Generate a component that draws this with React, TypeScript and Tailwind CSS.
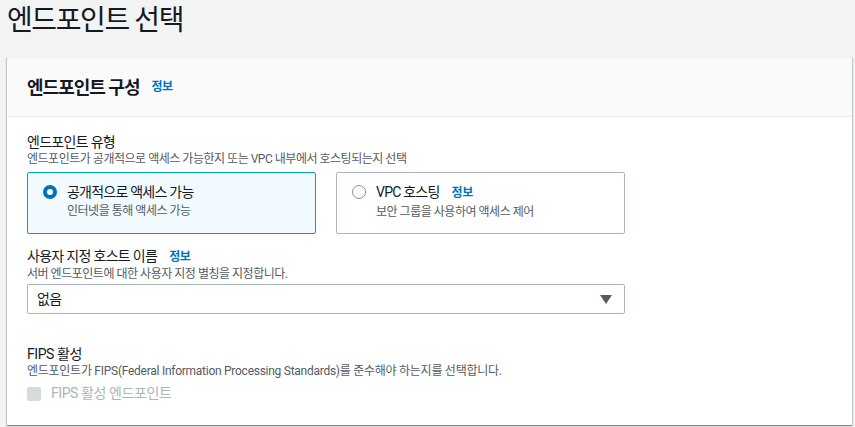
const font = { fontFamily: 'Roboto, "Noto Sans CJK KR", sans-serif' };

function Info() {
  return <span className="ml-3 text-[12px] font-bold text-[#0073bb] tracking-[-0.04em]">정보</span>;
}

function RadioCard({
  checked,
  label,
  sub,
  info,
}: {
  checked?: boolean;
  label: string;
  sub: string;
  info?: boolean;
}) {
  return (
    <div
      className={
        checked
          ? 'flex-1 h-[62px] border border-[#00a1c9] bg-[#f1faff] rounded-[2px] flex items-start pl-[15px] pt-[9px]'
          : 'flex-1 h-[62px] border border-[#aab7b8] bg-white rounded-[2px] flex items-start pl-[15px] pt-[9px]'
      }
    >
      {checked ? (
        <span className="mt-[3px] w-[14px] h-[14px] rounded-full border-[4px] border-[#0073bb] bg-white shrink-0" />
      ) : (
        <span className="mt-[3px] w-[14px] h-[14px] rounded-full border border-[#879596] bg-white shrink-0" />
      )}
      <div className="ml-[10px]">
        <p className="text-[14px] leading-[20px] text-[#16191f] tracking-[-0.055em]">
          {label}
          {info && <Info />}
        </p>
        <p className="text-[12px] leading-[18px] text-[#545b64] tracking-[-0.04em]">{sub}</p>
      </div>
    </div>
  );
}

export default function App() {
  return (
    <main className="w-[855px] h-[427px] bg-[#f2f3f3] overflow-hidden" style={font}>
      <h1 className="pl-[7px] pt-[1px] h-[57px] text-[28px] leading-[40px] text-[#16191f] tracking-[-0.05em]">
        엔드포인트 선택
      </h1>

      <section className="mx-[7px] mr-[3px] bg-white border-t border-[#eaeded] shadow-[0_1px_1px_0_rgba(0,28,36,0.3),1px_1px_1px_0_rgba(0,28,36,0.15),-1px_1px_1px_0_rgba(0,28,36,0.15)]">
        {/* Header */}
        <div className="h-[59px] bg-[#fafafa] border-b border-[#eaeded] flex items-center px-5">
          <h2 className="text-[18px] font-bold text-[#16191f] tracking-[-0.055em]">엔드포인트 구성</h2>
          <Info />
        </div>

        {/* Body */}
        <div className="px-5 pt-[16px] pb-[21px]">
          <p className="text-[14px] leading-[18px] text-[#16191f] tracking-[-0.05em]">엔드포인트 유형</p>
          <p className="text-[12px] leading-[16px] text-[#545b64] tracking-[-0.04em]">
            엔드포인트가 공개적으로 액세스 가능한지 또는 VPC 내부에서 호스팅되는지 선택
          </p>
          <div className="mt-[5px] flex gap-5 w-[598px]">
            <RadioCard checked label="공개적으로 액세스 가능" sub="인터넷을 통해 액세스 가능" />
            <RadioCard label="VPC 호스팅" sub="보안 그룹을 사용하여 액세스 제어" info />
          </div>

          <p className="mt-[13px] text-[14px] leading-[18px] text-[#16191f] tracking-[-0.05em]">
            사용자 지정 호스트 이름
            <Info />
          </p>
          <p className="text-[12px] leading-[16px] text-[#545b64] tracking-[-0.04em]">
            서버 엔드포인트에 대한 사용자 지정 별칭을 지정합니다.
          </p>
          <div className="mt-[2px] w-[598px] h-[30px] border border-[#aab7b8] rounded-[2px] flex items-center justify-between pl-[9px] pr-[12px]">
            <span className="text-[14px] text-[#16191f] tracking-[-0.05em]">없음</span>
            <svg width="12" height="9" viewBox="0 0 12 9">
              <path d="M0 0h12L6 9z" fill="#545b64" />
            </svg>
          </div>

          <p className="mt-[31px] text-[14px] leading-[18px] text-[#16191f] tracking-[-0.03em]">FIPS 활성</p>
          <p className="text-[12px] leading-[16px] text-[#545b64] tracking-[-0.022em]">
            엔드포인트가 FIPS(Federal Information Processing Standards)를 준수해야 하는지를 선택합니다.
          </p>
          <div className="mt-[4px] flex items-center">
            <span className="w-[14px] h-[14px] rounded-[2px] bg-[#d5dbdb]" />
            <span className="ml-[10px] text-[14px] text-[#aab7b8] tracking-[-0.03em]">FIPS 활성 엔드포인트</span>
          </div>
        </div>
      </section>
    </main>
  );
}
